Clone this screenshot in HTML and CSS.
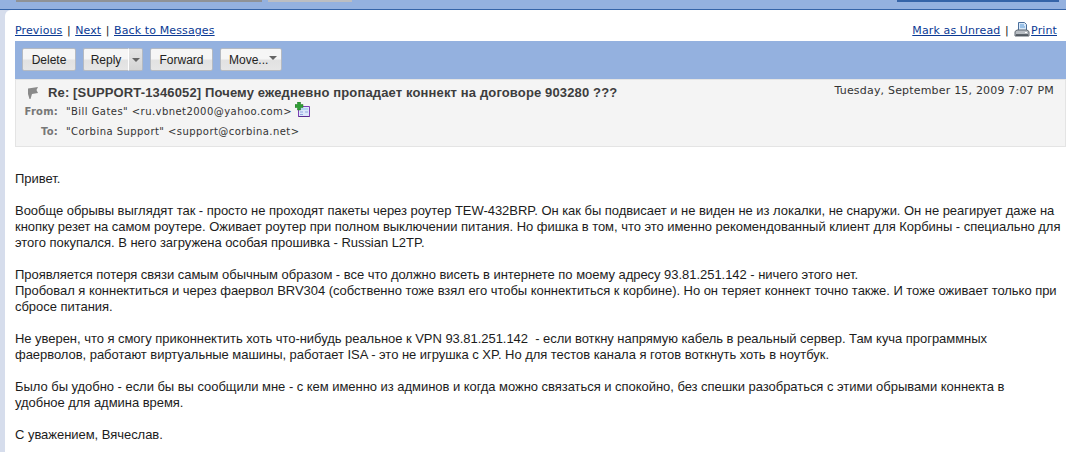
FILE: index.html
```html
<!DOCTYPE html>
<html lang="ru">
<head>
<meta charset="utf-8">
<title>Message</title>
<link rel="stylesheet" href="styles.css">
</head>
<body>
<div class="topband">
  <div class="tab tab-a"></div>
  <div class="tab tab-b"></div>
  <div class="tab tab-c"></div>
</div>
<div class="shell">
  <div class="panel">
    <div class="navrow">
      <div class="links"><a href="#">Previous</a><i>|</i><a href="#">Next</a><i>|</i><a href="#">Back to Messages</a></div>
      <div class="links"><a href="#">Mark as Unread</a><i>|</i>
        <svg class="printer" width="16" height="16" viewBox="0 0 16 16"><path d="M4.500.5h6l2 2v6h-8z" fill="#d8e8f8" stroke="#4a6f9c"/><path d="M6 3h4M6 5h5" stroke="#5d9bd8"/><path d="M1 9.500 3 8h10l2 1.500V14H1z" fill="#b9bec4" stroke="#5f6770"/><path d="M2 13h12" stroke="#3f464e" stroke-width="1.500"/><path d="M11 10.500h2" stroke="#fff"/></svg>
        <a href="#">Print</a></div>
    </div>
    <div class="toolbar">
      <button class="btn">Delete</button>
      <div class="split"><button class="btn btn-main">Reply</button><button class="btn btn-arrow"><span class="caret"></span></button></div>
      <button class="btn btn-forward">Forward</button>
      <button class="btn btn-move">Move...<span class="caret caret-move"></span></button>
    </div>
    <div class="header">
      <div class="date">Tuesday, September 15, 2009 7:07 PM</div>
      <div class="subject">
        <svg class="flag" width="12" height="14" viewBox="0 0 12 14"><path d="M1 2.500 11 1 9.500 4 11 7 5 8 3.500 13H2.500L1 8z" fill="#8a8a8a"/></svg>
        <span>Re: [SUPPORT-1346052] Почему ежедневно пропадает коннект на договоре 903280 ???</span>
      </div>
      <div class="addr addr-from"><b>From:</b><span>"Bill Gates" &lt;ru.vbnet2000@yahoo.com&gt;</span>
        <svg class="addcontact" width="16" height="16" viewBox="0 0 16 16"><path d="M3.500 4.500h11v10h-11z" fill="#dce6fa" stroke="#7d3fb5"/><path d="M5 7h8" stroke="#8fc3ea"/><path d="M5 10h3M10 10h3M5 12.500h3" stroke="#8fa6e0"/><path d="M3.500 14.500h11" stroke="#5b2c90"/><path d="M2.500 0h3v2.500H8v3H5.500V8h-3V5.500H0v-3h2.500z" fill="#2f9e35" stroke="#1c6e22" stroke-width=".5"/></svg></div>
      <div class="addr addr-to"><b>To:</b><span>"Corbina Support" &lt;support@corbina.net&gt;</span></div>
    </div>
    <div class="body">
      <p>Привет.</p>
      <p>Вообще обрывы выглядят так - просто не проходят пакеты через роутер TEW-432BRP. Он как бы подвисает и не виден не из локалки, не снаружи. Он не реагирует даже на<br>кнопку резет на самом роутере. Оживает роутер при полном выключении питания. Но фишка в том, что это именно рекомендованный клиент для Корбины - специально для<br>этого покупался. В него загружена особая прошивка - Russian L2TP.</p>
      <p>Проявляется потеря связи самым обычным образом - все что должно висеть в интернете по моему адресу 93.81.251.142 - ничего этого нет.<br>Пробовал я коннектиться и через фаервол BRV304 (собственно тоже взял его чтобы коннектиться к корбине). Но он теряет коннект точно также. И тоже оживает только при<br>сбросе питания.</p>
      <p>Не уверен, что я смогу приконнектить хоть что-нибудь реальное к VPN 93.81.251.142 &nbsp;- если воткну напрямую кабель в реальный сервер. Там куча программных<br>фаерволов, работают виртуальные машины, работает ISA - это не игрушка с XP. Но для тестов канала я готов воткнуть хоть в ноутбук.</p>
      <p>Было бы удобно - если бы вы сообщили мне - с кем именно из админов и когда можно связаться и спокойно, без спешки разобраться с этими обрывами коннекта в<br>удобное для админа время.</p>
      <p>С уважением, Вячеслав.</p>
    </div>
  </div>
</div>
</body>
</html>
```
FILE: styles.css
```css
html, body { margin: 0; padding: 0; height: 452px; overflow: hidden; background: #d6ddec; }
.topband { height: 9px; background: #94b1df; border-bottom: 1px solid #3564a8; display: flex; }
.tab { height: 2px; }
.tab-a { width: 246px; margin-left: 16px; background: #8f9296; }
.tab-b { width: 84px; margin-left: 6px; background: #bcbec2; }
.tab-c { width: 162px; margin-left: auto; margin-right: 7px; background: #3564a8; }
.shell { padding-left: 5px; }
.panel { background: #fff; border-top-left-radius: 6px; padding: 10px 0 0 10px; height: 442px; box-sizing: border-box; }
.navrow { display: flex; justify-content: space-between; align-items: flex-end; height: 21px; padding-right: 9px; box-sizing: border-box; font: 11px/14px "DejaVu Sans", Verdana, sans-serif; }
.links { display: flex; align-items: center; color: #222; white-space: nowrap; padding-bottom: 3px; }
.links a { color: #0b3a94; text-decoration: underline; letter-spacing: .12px; }
.links i { font-style: normal; margin: 0 4.5px; }
.printer { margin: -3px 1px 0 1px; }
.toolbar { height: 38px; background: #94b1df; display: flex; align-items: center; gap: 7px; padding-left: 7px; padding-bottom: 1px; box-sizing: border-box; }
.btn { height: 23px; width: 54px; padding: 0; border: 1px solid #b5bac2; border-radius: 2px; background: linear-gradient(#f6f6f6 0, #f6f6f6 45%, #e2e2e2 55%, #e6e6e6 100%); font: 12px "Liberation Sans", Arial, sans-serif; color: #222; box-sizing: border-box; }
.split { display: flex; }
.btn-main { width: 46px; border-right: 1px solid #fff; border-radius: 2px 0 0 2px; }
.btn-arrow { width: 14px; border-left: 0; border-radius: 0 2px 2px 0; background: linear-gradient(#e4e4e4, #d4d4d4); display: flex; align-items: center; justify-content: center; }
.btn-forward { width: 63px; }
.btn-move { width: 62px; text-align: left; padding-left: 8px; position: relative; }
.caret { display: block; width: 0; height: 0; border: 4px solid transparent; border-top: 4px solid #666; border-bottom: 0; }
.caret-move { position: absolute; right: 4px; top: 7px; }
.header { height: 68px; background: #f4f4f4; border: 1px solid #e4e4e4; box-sizing: border-box; position: relative; }
.date { position: absolute; right: 11px; top: 4px; font: 11px/14px "DejaVu Sans", Verdana, sans-serif; color: #333; letter-spacing: .19px; }
.subject { display: flex; align-items: center; height: 14px; margin: 6px 0 0 11px; font: bold 13px/14px "Liberation Sans", Arial, sans-serif; color: #3d3d3d; letter-spacing: .14px; }
.subject span { margin-left: 9px; }
.flag { display: block; }
.addr { display: flex; align-items: center; font: 10px/14px "DejaVu Sans", Verdana, sans-serif; color: #333; letter-spacing: .45px; }
.addr b { width: 42px; margin-right: 8px; text-align: right; color: #777; flex: none; letter-spacing: .2px; }
.addr-from { margin-top: 5px; }
.addr-to { margin-top: 6px; }
.addcontact { margin: -4px 0 0 3px; }
.body { padding: 24px 0 0 0; font: 13px/16px "Liberation Sans", Arial, sans-serif; color: #1c1c1c; white-space: nowrap; letter-spacing: -.04px; }
.body p { margin: 0 0 16px; }
```
